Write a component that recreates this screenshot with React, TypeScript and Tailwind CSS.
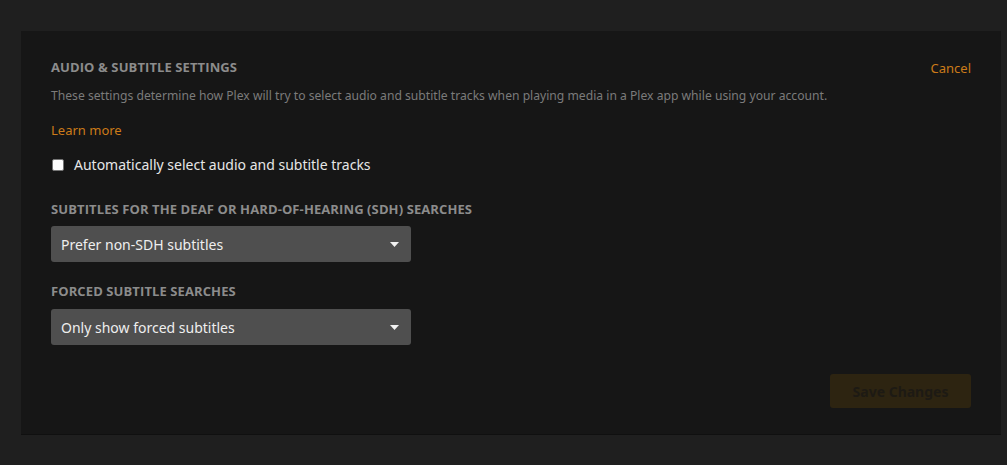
import React from "react";

function SelectBox({ value }: { value: string }) {
  return (
    <div className="flex items-center justify-between w-[360px] h-[36px] pl-[10px] pr-[12px] rounded-[3px] bg-[#4f4f4f] text-[14px] text-[#eeeeee]">
      <span>{value}</span>
      <svg width="9" height="5" viewBox="0 0 9 5">
        <path d="M0 0h9L4.5 5z" fill="#f2f2f2" />
      </svg>
    </div>
  );
}

export default function App() {
  return (
    <div className="w-[1007px] h-[465px] bg-[#1f1f1f] pt-[31px] pl-[21px] overflow-hidden" style={{ fontFamily: '"Noto Sans", "Open Sans", sans-serif' }}>
      <div className="w-[980px] h-[404px] bg-[#161616] border-b border-[#101010] pt-[26px] px-[30px] flex flex-col">
        <div className="flex items-start justify-between">
          <h2 className="text-[13px] font-bold text-[#8c8c8c] leading-[20px] tracking-[0.1px]" style={{ fontFamily: '"Open Sans", sans-serif' }}>
            AUDIO &amp; SUBTITLE SETTINGS
          </h2>
          <button className="text-[13px] text-[#cc7b19] leading-[20px] mt-[1px]">Cancel</button>
        </div>
        <p className="mt-[9px] text-[12.15px] leading-[18px] text-[#7b7b7b]">
          These settings determine how Plex will try to select audio and subtitle tracks when playing media in a Plex app while using your account.
        </p>
        <a className="mt-[16px] text-[13px] leading-[18px] text-[#cc7b19]">Learn more</a>
        <label className="mt-[15px] flex items-center gap-[10px] text-[14px] text-[#e6e6e6] leading-[22px]">
          <span className="ml-[1px] w-[12px] h-[12px] bg-white rounded-[2px] border border-[#767676]" />
          Automatically select audio and subtitle tracks
        </label>
        <h3 className="mt-[23px] text-[13px] font-bold text-[#8c8c8c] leading-[20px] tracking-[0.1px]" style={{ fontFamily: '"Open Sans", sans-serif' }}>
          SUBTITLES FOR THE DEAF OR HARD-OF-HEARING (SDH) SEARCHES
        </h3>
        <div className="mt-[7px]">
          <SelectBox value="Prefer non-SDH subtitles" />
        </div>
        <h3 className="mt-[19px] text-[13px] font-bold text-[#8c8c8c] leading-[20px] tracking-[0.1px]" style={{ fontFamily: '"Open Sans", sans-serif' }}>
          FORCED SUBTITLE SEARCHES
        </h3>
        <div className="mt-[8px]">
          <SelectBox value="Only show forced subtitles" />
        </div>
        <div className="mt-[29px] flex justify-end">
          <button className="w-[141px] h-[34px] rounded-[3px] bg-[#2d2411] text-[14px] font-bold text-[#1d1a14]">
            Save Changes
          </button>
        </div>
      </div>
    </div>
  );
}
